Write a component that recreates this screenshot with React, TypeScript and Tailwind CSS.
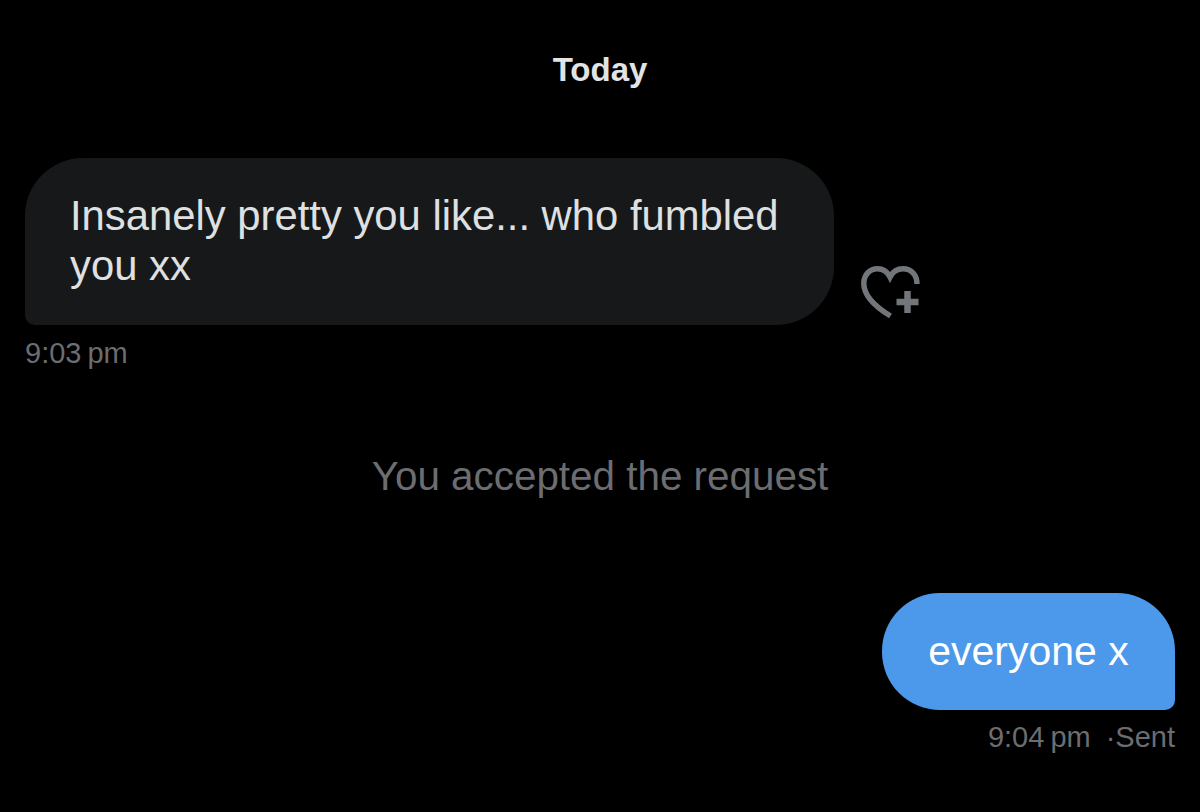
const font = "font-['Liberation_Sans','Arial',sans-serif]"

const HeartPlus = () => (
  <svg width="62" height="54" viewBox="0 0 62 54" fill="none" stroke="#72767a">
    <path d="M30.5 51 C19 44 3.8 33 3.8 18.5 C3.8 9.5 10 3.8 17.5 3.8 C23 3.8 27.5 7 30 12 C32.5 7 37.5 3.8 43 3.8 C51 3.8 57 9.5 57 19" strokeWidth="5.5" />
    <path d="M47.5 26 V48 M36.5 37 H58.5" strokeWidth="6.5" />
  </svg>
)

export default function App() {
  return (
    <div className={`${font} flex h-[812px] w-[1200px] flex-col overflow-hidden bg-black`}>
      <div className="pt-[52px] text-center text-[33px] leading-[36px] font-bold text-[#e2e3e4]">Today</div>

      <div className="mt-[70px] flex items-end pl-[25px]">
        <div className="h-[167px] w-[809px] rounded-[58px] rounded-bl-[10px] bg-[#17181a] px-[45px] pt-[33px] text-[41.8px] leading-[50px] text-[#dfe0e1]">
          Insanely pretty you like... who fumbled you xx
        </div>
        <div className="mb-[6px] ml-[26px]">
          <HeartPlus />
        </div>
      </div>
      <div className="mt-[10px] flex gap-[6px] pl-[25px] text-[29px] leading-[36px] text-[#6b6d71]">
        <span>9:03</span>
        <span>pm</span>
      </div>

      <div className="mt-[81px] text-center text-[40.4px] leading-[48px] text-[#6b6d71]">You accepted the request</div>

      <div className="mt-[93px] flex justify-end pr-[25px]">
        <div className="flex h-[117px] w-[293px] items-center justify-center rounded-[58px] rounded-br-[10px] bg-[#4c99eb] text-[41px] text-white">
          everyone x
        </div>
      </div>
      <div className="mt-[9px] flex justify-end pr-[25px] text-[29px] leading-[36px] text-[#6b6d71]">
        <span className="flex gap-[6px]">
          <span>9:04</span>
          <span>pm</span>
        </span>
        <span className="ml-[15px]">·Sent</span>
      </div>
    </div>
  )
}
